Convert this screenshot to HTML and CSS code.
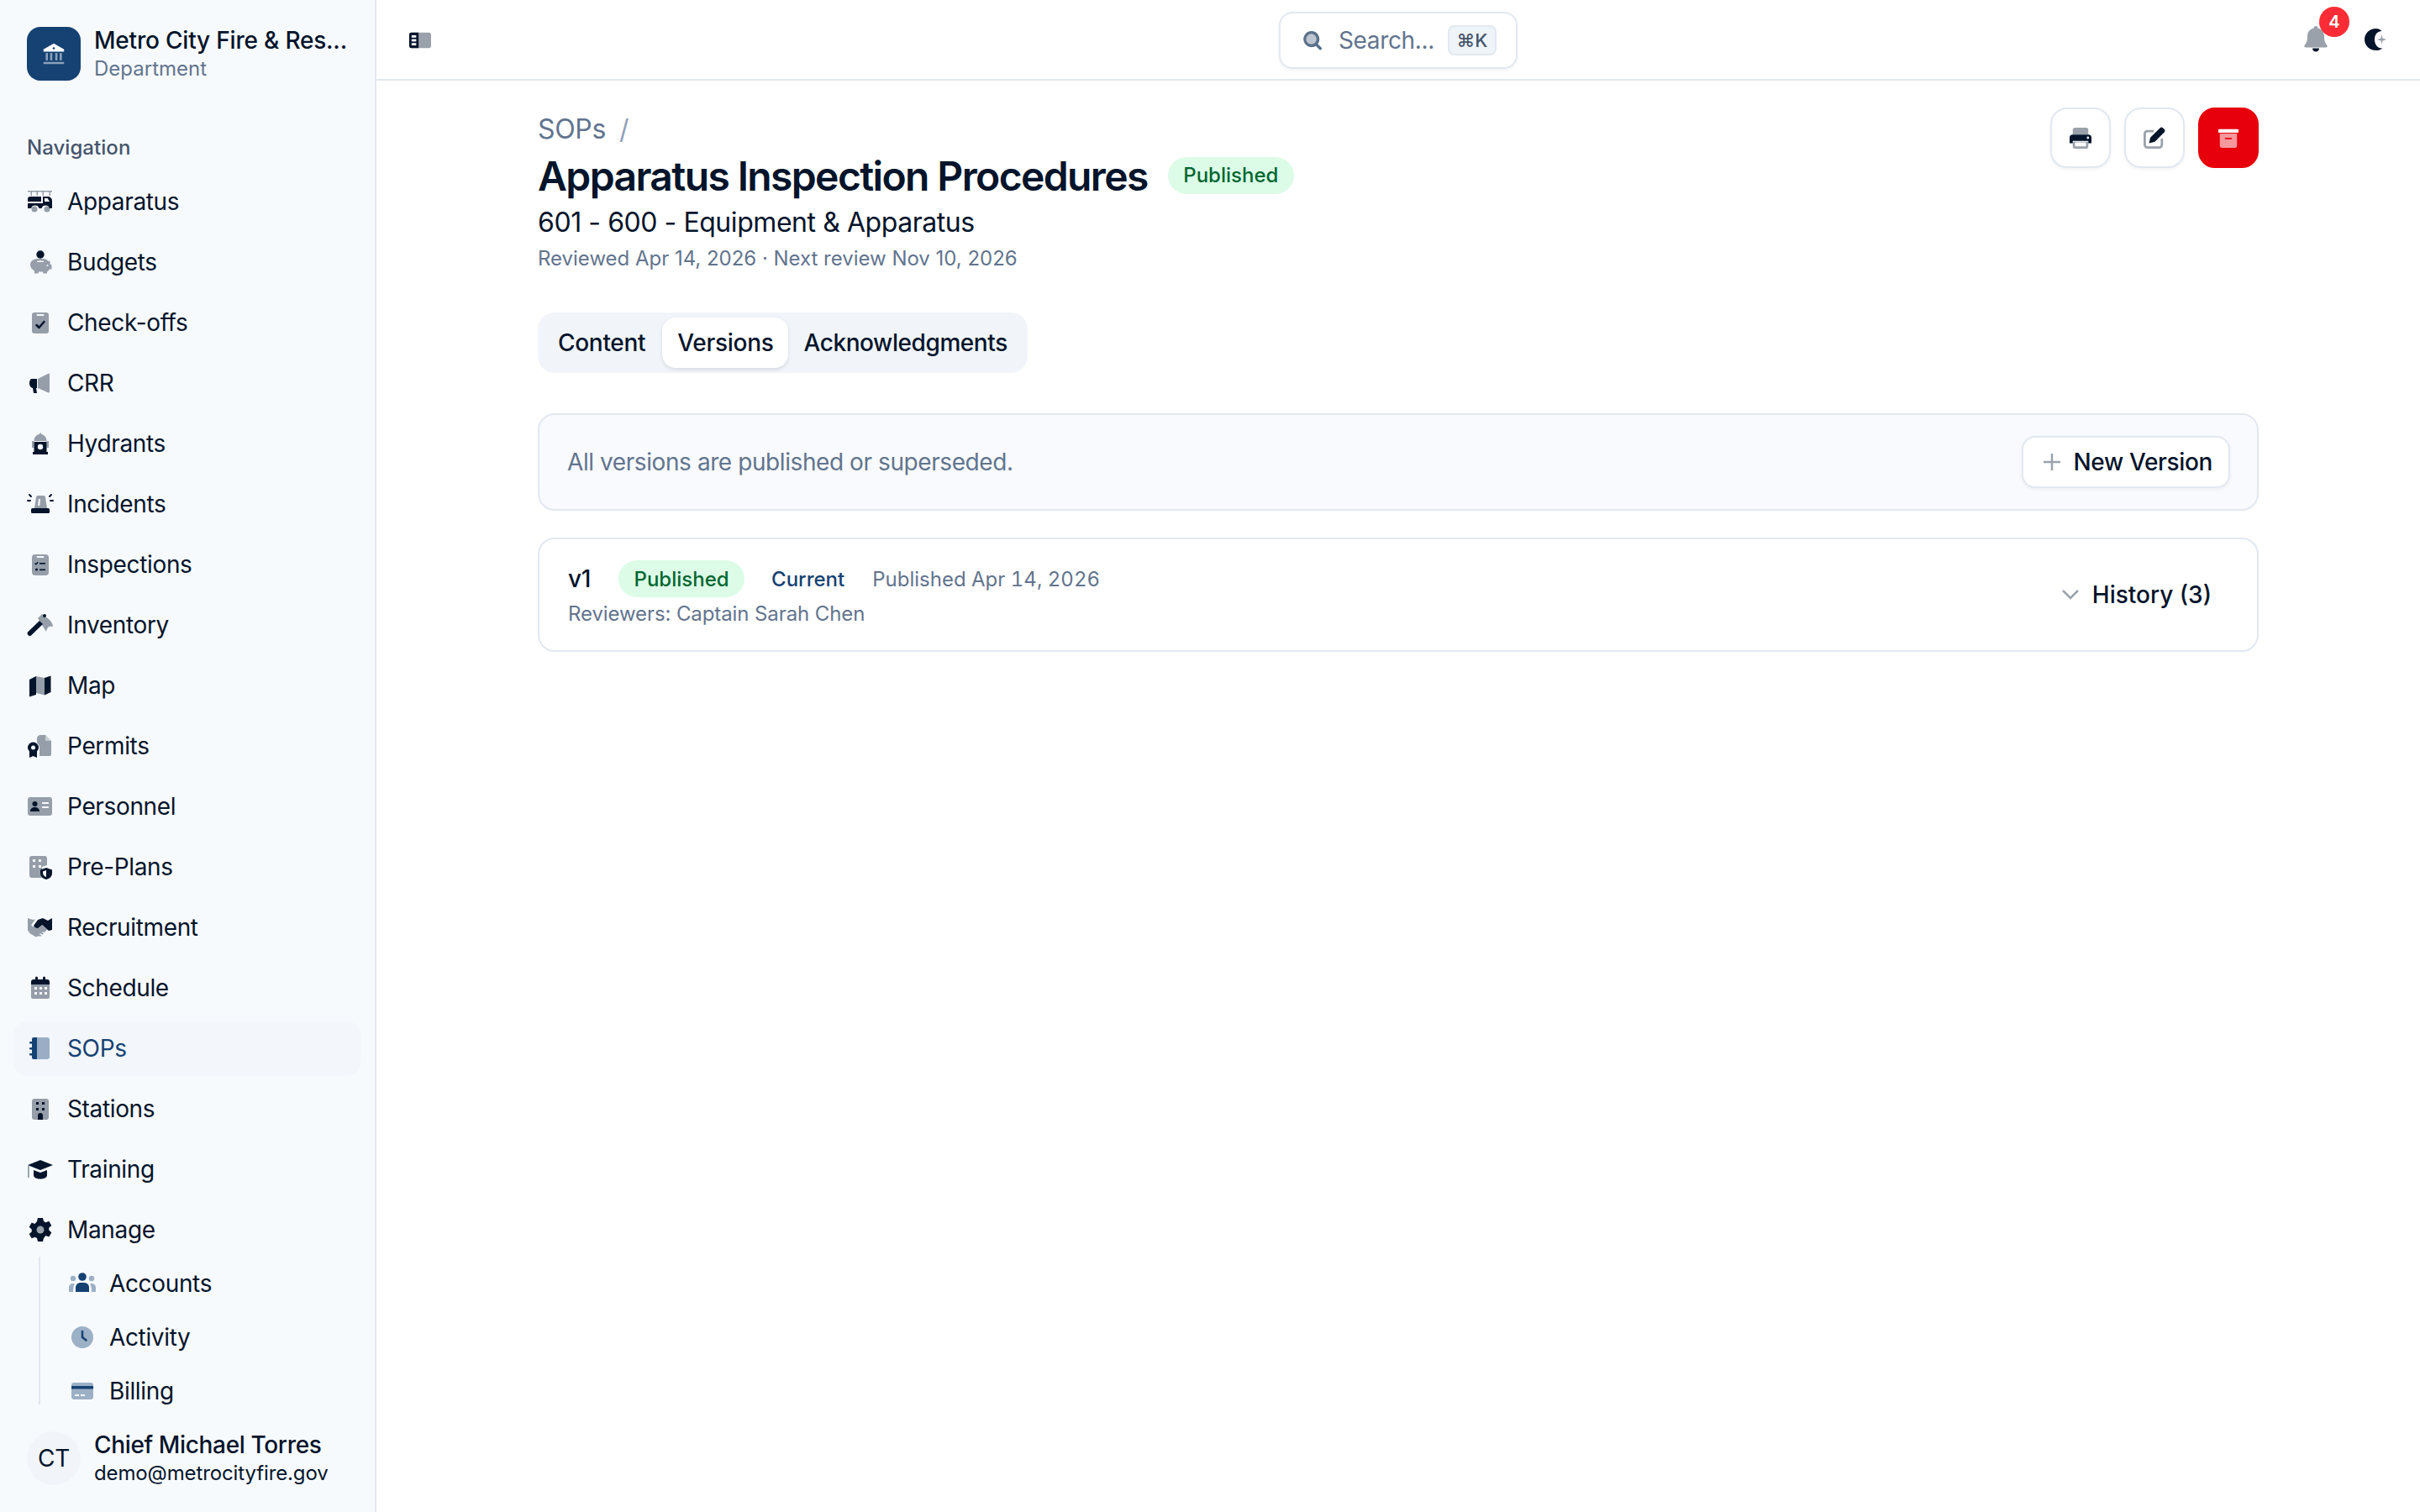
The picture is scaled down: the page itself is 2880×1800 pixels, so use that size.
FILE: index.html
```html
<!DOCTYPE html>
<html lang="en">
<head>
<meta charset="utf-8">
<title>Apparatus Inspection Procedures</title>
<link rel="stylesheet" href="styles.css">
</head>
<body>
<div class="app">
  <aside class="sidebar">
    <div class="brand">
      <div class="logo">
        <svg class="logo-icon" viewBox="0 0 32 32"><path class="w" d="M16 2 L30 10 V13 H2 V10 Z"/><circle class="b" cx="16" cy="8.500" r="1.500"/><g class="w s"><rect x="5" y="15" width="3" height="10"/><rect x="11" y="15" width="3" height="10"/><rect x="18" y="15" width="3" height="10"/><rect x="24" y="15" width="3" height="10"/><rect x="2" y="27" width="28" height="3" rx="1"/></g></svg>
      </div>
      <div class="brand-text">
        <div class="brand-name">Metro City Fire &amp; Res...</div>
        <div class="brand-sub">Department</div>
      </div>
    </div>
    <div class="nav-label">Navigation</div>
    <nav class="nav">
      <a class="item"><svg class="ic" viewBox="0 0 32 32"><path class="s" d="M1 3h29v1.500H28V9h-1.500V4.500H20V9h-1.500V4.500H13V9h-1.500V4.500H6V9H4.500V4.500H1z"/><path d="M4 10h13v6H1v-3a3 3 0 0 1 3-3zM19 10h6a5 5 0 0 1 5 5v9h-3a5 5 0 0 0-9.500 0h-3a5 5 0 0 0-9.500 0H1v-6h18z"/><path class="bg" d="M21 12h3.500l2.500 4h-6z"/><g class="s"><circle cx="9" cy="25" r="3.500"/><circle cx="24" cy="25" r="3.500"/></g></svg><span>Apparatus</span></a>
      <a class="item"><svg class="ic" viewBox="0 0 32 32"><circle cx="16" cy="7" r="4.700"/><path class="s" d="M13 12h6c3 0 5 1 6.500 3l2-.5v4l2 1v5h-2.500c-1 1.500-2 2.300-3 3v2h-4.500l-.5-2h-5l-.5 2H9v-3c-3-2-5-4-5-7.500C4 15 8 12 13 12z"/><rect class="bg" x="12" y="14.500" width="8" height="1.500" rx=".7"/><circle class="bg" cx="24.500" cy="20" r="1"/></svg><span>Budgets</span></a>
      <a class="item"><svg class="ic" viewBox="0 0 32 32"><rect class="s" x="6" y="4" width="20" height="25" rx="3"/><rect class="bg" x="11.500" y="6" width="9" height="2" rx="1"/><path class="line" d="M11.500 19l3 3 6-7"/></svg><span>Check-offs</span></a>
      <a class="item"><svg class="ic" viewBox="0 0 32 32"><path class="s" d="M13 11 L25 5 C26.500 4.200 27 5 27 6 V26 C27 27.500 26 28 25 27.300 L13 22z"/><path d="M6 11h6v11H11l1 6h-4l-1-6c-2-.5-4-2-4-5.500S4 11 6 11z"/></svg><span>CRR</span></a>
      <a class="item"><svg class="ic" viewBox="0 0 32 32"><path class="s" d="M16 3l1.500 2C21 6 23.500 8.500 23.500 13H26v8h-2.500v-8h-15v8H6v-8h2.500c0-4.500 2.500-7 6-8z"/><path d="M8.500 14h15v12H25v3H7v-3h1.500z"/><circle class="bg" cx="16" cy="20" r="3.200"/></svg><span>Hydrants</span></a>
      <a class="item"><svg class="ic" viewBox="0 0 32 32"><path class="s" d="M11 8a2 2 0 0 1 2-2h7a2 2 0 0 1 2 2l2 13H9z"/><rect x="5" y="21" width="22" height="6" rx="1.500"/><path class="bg" d="M14 10h2l-.7 8h-2.300z"/><path class="line2" d="M3 5l2 2M29 5l-2 2M1 12h3M28 12h3"/></svg><span>Incidents</span></a>
      <a class="item"><svg class="ic" viewBox="0 0 32 32"><rect class="s" x="6" y="4" width="20" height="25" rx="4"/><rect class="bg" x="11.500" y="6" width="9" height="2" rx="1"/><path class="line3" d="M9.500 14.500l1.300 1.300 2.500-2.500"/><rect x="15" y="14" width="7" height="1.600"/><circle cx="11.500" cy="22" r="1.500"/><rect x="15" y="21.500" width="7" height="1.600"/></svg><span>Inspections</span></a>
      <a class="item"><svg class="ic" viewBox="0 0 32 32"><path class="s" d="M13 8l5-5 4 3 4 3c3 3 5 6 5 9-2-.5-3-.5-5 0-1.500 1.500-2.500 3-3 6z"/><path d="M1.500 24L15 11l4 4L5 28.500c-1 1-2 1-3.500-.5s-1-3 0-4z"/><circle cx="21" cy="5" r="2"/></svg><span>Inventory</span></a>
      <a class="item"><svg class="ic" viewBox="0 0 32 32"><path d="M3 9l8-4v22l-8 2.500zM21 7l7.500-2.500V24l-7.500 3.500z"/><path class="s" d="M11 5l10 2v20.500L11 25z"/></svg><span>Map</span></a>
      <a class="item"><svg class="ic" viewBox="0 0 32 32"><path class="s" d="M16 3h6l7 7v16a2 2 0 0 1-2 2H15v-7a10 10 0 0 0-3-9V7c0-2 2-4 4-4z"/><path class="bg" d="M22 3v7h7" style="opacity:.5"/><circle cx="7.500" cy="18" r="6.500"/><circle class="bg" cx="7.500" cy="18" r="2.500"/><path d="M3 23h9v7l-4.500-2L3 30z"/></svg><span>Permits</span></a>
      <a class="item"><svg class="ic" viewBox="0 0 32 32"><rect class="s" x="1" y="5" width="29" height="22" rx="3"/><circle cx="9.500" cy="13" r="3"/><path d="M4 22c0-3.500 2.500-5 5.500-5s5.500 1.500 5.500 5z"/><rect class="bg" x="18" y="11" width="8" height="2" rx=".5"/><rect class="bg" x="18" y="16" width="8" height="2" rx=".5"/></svg><span>Personnel</span></a>
      <a class="item"><svg class="ic" viewBox="0 0 32 32"><path class="s" d="M6 3h15a3 3 0 0 1 3 3v8l-6 2v13H6a3 3 0 0 1-3-3V6a3 3 0 0 1 3-3z"/><g class="bg"><rect x="7" y="7" width="3" height="3"/><rect x="14" y="7" width="3" height="3"/><rect x="7" y="14" width="3" height="3"/><rect x="14" y="14" width="3" height="3"/></g><path d="M23 17l7 2.500v4c0 4-3 6.500-7 7.500-4-1-7-3.500-7-7.500v-4z"/><path class="bg" d="M23 20v8c-2.500-1-4-2.500-4-5v-1.500z"/></svg><span>Pre-Plans</span></a>
      <a class="item"><svg class="ic" viewBox="0 0 32 32"><path class="s" d="M1 5l6 2 3-.5-5 7 3 2 6-5 10 8-7 8h-4l-2 1-7-4-3-4z"/><path d="M13 7l6-2 6 3 5-3v14l-4 1-8-7-5 4c-2.500 0-4-1.500-5-3z"/><path class="bg" d="M19 21l4 3-1 1-4-3zM16 23l4 3-1 1-4-3z"/></svg><span>Recruitment</span></a>
      <a class="item"><svg class="ic" viewBox="0 0 32 32"><path d="M10 4a1.500 1.500 0 0 1 3 0v2h6V4a1.500 1.500 0 0 1 3 0v2h2a3 3 0 0 1 3 3v3H5V9a3 3 0 0 1 3-3h2z"/><path class="s" d="M5 12h22v15a2 2 0 0 1-2 2H7a2 2 0 0 1-2-2z"/><g class="bg"><rect x="9" y="15" width="3" height="3"/><rect x="15" y="15" width="3" height="3"/><rect x="21" y="15" width="3" height="3"/><rect x="9" y="21" width="3" height="3"/><rect x="15" y="21" width="3" height="3"/><rect x="21" y="21" width="3" height="3"/></g></svg><span>Schedule</span></a>
      <a class="item active"><svg class="ic blue" viewBox="0 0 32 32"><path class="s" d="M11 3h13a3 3 0 0 1 3 3v20a3 3 0 0 1-3 3H11z"/><path d="M8 3h4v26H8a2 2 0 0 1-2-2V5a2 2 0 0 1 2-2z"/><rect x="3" y="8" width="5" height="2.500" rx="1"/><rect x="3" y="15" width="5" height="2.500" rx="1"/><rect x="3" y="22" width="5" height="2.500" rx="1"/></svg><span>SOPs</span></a>
      <a class="item"><svg class="ic" viewBox="0 0 32 32"><rect class="s" x="6" y="4" width="20" height="25" rx="3"/><rect x="11" y="8" width="3" height="3"/><rect x="18" y="8" width="3" height="3"/><rect x="11" y="15" width="3" height="3"/><rect x="18" y="15" width="3" height="3"/><path d="M13 24a3 3 0 0 1 6 0v5h-6z"/></svg><span>Stations</span></a>
      <a class="item"><svg class="ic" viewBox="0 0 32 32"><path d="M16 5l15 6-15 6-15-6z"/><path d="M8 17l8 3 8-3v6c0 3-4 4.500-8 4.500S8 26 8 23z"/><rect class="s" x="1" y="12" width="1.800" height="14"/></svg><span>Training</span></a>
      <a class="item"><svg class="ic" viewBox="0 0 32 32"><path d="M13 2h6l1 4 2.500 1.200 3.800-1.500 3 5.300-3 2.600v3l3 2.600-3 5.300-3.800-1.500L20 26l-1 4h-6l-1-4-2.500-1.200-3.800 1.500-3-5.300 3-2.600v-3l-3-2.600 3-5.300 3.800 1.500L12 6z"/><circle class="s0" cx="16" cy="16" r="4.500"/></svg><span>Manage</span></a>
      <div class="subnav">
        <a class="item sub"><svg class="ic blue" viewBox="0 0 32 32"><g class="s"><circle cx="5" cy="10" r="3.200"/><circle cx="27" cy="10" r="3.200"/><path d="M0 26v-5c0-3 2-5 5-5h2c-1.500 2-2 6-2 10zM32 26v-5c0-3-2-5-5-5h-2c1.500 2 2 6 2 10z"/></g><circle cx="16" cy="8" r="4.800"/><path d="M8 26v-5c0-4 3-6 6-6h4c3 0 6 2 6 6v5z"/></svg><span>Accounts</span></a>
        <a class="item sub"><svg class="ic blue" viewBox="0 0 32 32"><circle class="s" cx="16" cy="16" r="13"/><path class="line" d="M16 9v7l4.500 3.500"/></svg><span>Activity</span></a>
        <a class="item sub"><svg class="ic blue" viewBox="0 0 32 32"><path class="s" d="M6 6h20a3 3 0 0 1 3 3v14a3 3 0 0 1-3 3H6a3 3 0 0 1-3-3V9a3 3 0 0 1 3-3z"/><rect x="3" y="10" width="26" height="3.500"/><rect class="bg" x="7" y="20" width="5" height="2"/><rect class="bg" x="14" y="20" width="5" height="2"/></svg><span>Billing</span></a>
      </div>
    </nav>
    <div class="user">
      <div class="avatar">CT</div>
      <div class="user-text">
        <div class="user-name">Chief Michael Torres</div>
        <div class="user-mail">demo@metrocityfire.gov</div>
      </div>
    </div>
  </aside>
  <div class="main">
    <header class="topbar">
      <svg class="toggle" viewBox="0 0 28 20"><rect class="s" x="0" y="0" width="28" height="20" rx="3"/><path d="M3 0h9v20H3a3 3 0 0 1-3-3V3a3 3 0 0 1 3-3z"/><g class="w"><rect x="3" y="3.500" width="6" height="3"/><rect x="3" y="8.500" width="6" height="3"/><rect x="3" y="13.500" width="6" height="3"/></g></svg>
      <div class="search">
        <svg class="search-ic" viewBox="0 0 24 24"><circle class="s" cx="10" cy="10" r="8"/><path d="M10 0a10 10 0 0 1 8 16l5.500 5.500-2.500 2.500-5.500-5.500A10 10 0 1 1 10 0zm0 3.500a6.500 6.500 0 1 0 0 13 6.500 6.500 0 0 0 0-13z"/></svg>
        <span class="search-text">Search...</span>
        <kbd class="kbd">⌘K</kbd>
      </div>
      <div class="top-right">
        <div class="bell">
          <svg class="bell-ic" viewBox="0 0 28 32"><path class="s" d="M14 0c1.500 0 2.500 1 2.500 2.500C21 3.500 24 7 24 12c0 6 1 8 3.500 11 .5 1 0 2.500-1.500 2.500H2C.5 25.500 0 24 .5 23 3 20 4 18 4 12c0-5 3-8.500 7.500-9.500C11.500 1 12.500 0 14 0z"/><path d="M10 26.500h8c0 2.500-2 4-4 4s-4-1.500-4-4z"/></svg>
          <span class="badge-count">4</span>
        </div>
        <svg class="moon" viewBox="0 0 26 26"><path d="M13.500 0C6 0 0 5.800 0 13s6 13 13.500 13c3 0 5.700-.9 8-2.600-5.500.6-9.500-4-9.500-10.400S16 3 20.500 3C18.700 1 16.500 0 13.500 0z"/><path class="s" d="M20.500 7l1 4.500 4.500 1.500-4.500 1.500-1 4.500-1-4.500L15 13l4.500-1.500z"/></svg>
      </div>
    </header>
    <main class="content">
      <div class="head">
        <div class="head-left">
          <div class="crumbs"><span>SOPs</span><span class="slash">/</span></div>
          <div class="title-row"><h1 class="title">Apparatus Inspection Procedures</h1><span class="pill">Published</span></div>
          <div class="subtitle">601 - 600 - Equipment &amp; Apparatus</div>
          <div class="meta">Reviewed Apr 14, 2026 · Next review Nov 10, 2026</div>
        </div>
        <div class="actions">
          <button class="act"><svg class="act-ic" viewBox="0 0 28 28"><path class="s" d="M4 10V4a3 3 0 0 1 3-3h14a3 3 0 0 1 3 3v6zM4 19h20v6a3 3 0 0 1-3 3H7a3 3 0 0 1-3-3z"/><path d="M4 10h20a4 4 0 0 1 4 4v7h-4v-3H4v3H0v-7a4 4 0 0 1 4-4z"/><rect class="w" x="7" y="20" width="14" height="5"/><circle class="w" cx="23.500" cy="14" r="1.500"/></svg></button>
          <button class="act"><svg class="act-ic" viewBox="0 0 28 28"><path class="s" d="M5 4h8v3H5a2 2 0 0 0-2 2v14a2 2 0 0 0 2 2h15a2 2 0 0 0 2-2v-8h3v8a5 5 0 0 1-5 5H5a5 5 0 0 1-5-5V9a5 5 0 0 1 5-5z"/><path d="M21 1.500a3 3 0 0 1 4 0l1.500 1.500a3 3 0 0 1 0 4L15 18.500c-.5.500-1 .8-1.500 1L7 21l1.500-6.500c.2-.6.500-1 1-1.500z"/></svg></button>
          <button class="act danger"><svg class="act-ic" viewBox="0 0 28 28"><rect class="w" x="1" y="3" width="26" height="4.500" rx="1"/><path class="w s5" d="M3 8.500h22v15.500a3 3 0 0 1-3 3H6a3 3 0 0 1-3-3z"/><rect class="red" x="9.500" y="14" width="9" height="2" rx="1"/></svg></button>
        </div>
      </div>
      <div class="tabs"><span class="tab">Content</span><span class="tab on">Versions</span><span class="tab">Acknowledgments</span></div>
      <section class="notice">
        <span class="notice-text">All versions are published or superseded.</span>
        <button class="new-btn"><svg class="plus" viewBox="0 0 20 20"><path d="M10 0v20M0 10h20"/></svg><span>New Version</span></button>
      </section>
      <section class="card">
        <div class="card-left">
          <div class="card-row"><span class="ver">v1</span><span class="pill">Published</span><span class="current">Current</span><span class="card-date">Published Apr 14, 2026</span></div>
          <div class="reviewers">Reviewers: Captain Sarah Chen</div>
        </div>
        <div class="history"><svg class="chev" viewBox="0 0 20 12"><path d="M1 1l9 9 9-9"/></svg><span>History (3)</span></div>
      </section>
    </main>
  </div>
</div>
</body>
</html>
```
FILE: styles.css
```css
* { box-sizing: border-box; }
html, body { margin: 0; height: 100%; }
body { font-family: Inter, "Liberation Sans", sans-serif; color: #03142b; background: #fff; font-size: 28px; letter-spacing: -.35px; }
.app { display: flex; height: 1800px; overflow: hidden; }

svg { fill: #03142b; flex: none; display: block; }
svg .s { opacity: .4; }
svg .s0 { fill: #9aa3ae; }
svg .bg { fill: #f7fafd; }
svg .w { fill: #fff; }
svg .line { fill: none; stroke: #03142b; stroke-width: 2.500; stroke-linecap: round; stroke-linejoin: round; }
svg .line2 { fill: none; stroke: #03142b; stroke-width: 2; stroke-linecap: round; }
svg .line3 { fill: none; stroke: #03142b; stroke-width: 1.300; }

.sidebar { width: 448px; flex: none; background: #f7fafd; border-right: 2px solid #e2e8f0; padding: 32px 16px 30px; display: flex; flex-direction: column; }
.brand { display: flex; align-items: center; gap: 16px; padding-left: 16px; height: 64px; }
.logo { width: 64px; height: 64px; border-radius: 16px; background: #154273; display: flex; align-items: center; justify-content: center; flex: none; }
.logo-icon { width: 28px; height: 28px; }
.logo-icon .b { fill: #154273; }
.logo-icon .s { opacity: .5; }
.brand-name { font-weight: 500; font-size: 28px; line-height: 36px; white-space: nowrap; letter-spacing: -.2px; }
.brand-sub { font-size: 24px; line-height: 32px; color: #62748e; letter-spacing: 0; }
.nav-label { margin-top: 64px; padding-left: 16px; font-size: 24px; line-height: 32px; font-weight: 500; color: #45556c; letter-spacing: .05px; }
.nav { display: flex; flex-direction: column; gap: 8px; margin-top: 16px; }
.item { display: flex; align-items: center; gap: 16px; height: 64px; padding: 0 16px; border-radius: 16px; font-size: 28px; }
.ic { width: 32px; height: 32px; }
.active { background: #f3f6fa; color: #154273; }
svg.blue { fill: #154273; }
svg.blue .line { stroke: #154273; }
.subnav { display: flex; flex-direction: column; gap: 8px; height: 176px; margin: -8px 0 0 30px; border-left: 2px solid #e2e8f0; padding: 4px 0 0 18px; }
.sub { height: 56px; flex: none; padding: 0 16px; }
.user { display: flex; align-items: center; gap: 16px; padding-left: 16px; margin-top: auto; }
.avatar { width: 64px; height: 64px; border-radius: 50%; background: #f1f5f9; display: flex; align-items: center; justify-content: center; font-size: 28px; flex: none; }
.user-name { font-size: 28px; line-height: 36px; font-weight: 500; white-space: nowrap; }
.user-mail { font-size: 24px; line-height: 32px; white-space: nowrap; letter-spacing: -.12px; }

.main { flex: 1; min-width: 0; display: flex; flex-direction: column; }
.topbar { height: 96px; border-bottom: 2px solid #e2e8f0; display: flex; align-items: center; padding: 0 40px 0 39px; position: relative; }
.toggle { width: 26px; height: 20px; margin-top: 2px; }
.search { position: absolute; left: 1074px; top: 14px; width: 284px; height: 68px; border: 2px solid #e2e8f0; border-radius: 16px; display: flex; align-items: center; gap: 19px; padding: 0 0 0 27px; box-shadow: 0 2px 4px rgba(15,23,43,.05); }
.search-ic { width: 23px; height: 23px; fill: #5b7189; }
.search-text { color: #62748e; font-size: 28px; letter-spacing: -.35px; }
.kbd { font-family: Inter, sans-serif; font-size: 22px; font-weight: 500; letter-spacing: 0; color: #45556c; background: #eff4f9; border: 2px solid #e2e8f0; border-radius: 8px; height: 36px; width: 58px; display: flex; align-items: center; justify-content: center; margin-left: -3px; flex: none; }
.top-right { margin-left: auto; display: flex; align-items: center; gap: 44px; }
.bell { position: relative; width: 28px; height: 32px; }
.bell-ic { width: 28px; height: 32px; }
.badge-count { position: absolute; left: 18px; top: -23px; width: 36px; height: 36px; border-radius: 50%; background: #fb2c36; color: #fff; font-size: 20px; font-weight: 600; letter-spacing: 0; display: flex; align-items: center; justify-content: center; }
.moon { width: 26px; height: 26px; }

.content { width: 2048px; margin: 0 auto; padding-top: 32px; }
.head { display: flex; justify-content: space-between; align-items: flex-start; }
.crumbs { display: flex; gap: 16px; font-size: 32px; line-height: 48px; color: #62748e; margin-top: 2px; letter-spacing: -.35px; }
.slash { color: #90a1b9; }
.title-row { display: flex; align-items: center; gap: 24px; margin-top: 2px; }
.title { margin: 0; font-size: 48px; line-height: 60px; font-weight: 600; letter-spacing: -1.620px; }
.title-row .pill { margin-top: -3px; }
.pill { background: #dcfce7; color: #016630; font-size: 24px; font-weight: 500; letter-spacing: 0; height: 44px; padding: 0 18.500px; border-radius: 22px; display: flex; align-items: center; }
.subtitle { font-size: 32px; line-height: 48px; margin-top: 1px; letter-spacing: -.44px; }
.meta { font-size: 24px; line-height: 36px; color: #62748e; margin-top: 1px; letter-spacing: -.02px; }
.actions { display: flex; gap: 16px; }
.act { width: 72px; height: 72px; border-radius: 20px; border: 2px solid #e2e8f0; background: #fff; display: flex; align-items: center; justify-content: center; padding: 0; box-shadow: 0 2px 4px rgba(15,23,43,.05); }
.act-ic { width: 26px; height: 26px; }
.danger { background: #e7000b; border-color: #e7000b; box-shadow: none; }
.danger .s5 { opacity: .6; }
.danger .red { fill: #e7000b; }
.tabs { display: inline-flex; margin-top: 46px; height: 72px; padding: 6px; background: #f1f5f9; border-radius: 20px; }
.tab { display: flex; align-items: center; padding: 0 18px; font-size: 28px; font-weight: 500; letter-spacing: -.3px; border-radius: 16px; }
.tab:first-child { padding-right: 20px; }
.tab:last-child { letter-spacing: -.42px; }
.on { background: #fff; box-shadow: 0 2px 4px rgba(15,23,43,.12); }
.notice { display: flex; align-items: center; justify-content: space-between; height: 116px; margin-top: 48px; padding: 0 32px 0 33px; border: 2px solid #e2e8f0; border-radius: 20px; background: #f8fafd; }
.notice-text { color: #62748e; font-size: 28px; letter-spacing: -.42px; }
.new-btn { display: flex; align-items: center; gap: 16px; height: 62px; padding: 0 19px 0 24px; border: 2px solid #e2e8f0; border-radius: 16px; background: #fff; font: 500 28px Inter, sans-serif; letter-spacing: -.35px; color: #03142b; box-shadow: 0 2px 4px rgba(15,23,43,.05); }
.plus { width: 20px; height: 20px; fill: none; stroke: #9aa3ae; stroke-width: 2.500; }
.card { display: flex; align-items: center; justify-content: space-between; height: 136px; margin-top: 32px; padding: 0 54px 0 34px; border: 2px solid #e2e8f0; border-radius: 20px; background: #fff; }
.card-left { padding-bottom: 2px; }
.card-row { display: flex; align-items: center; gap: 32px; }
.ver { font-size: 28px; font-weight: 500; width: 28px; }
.current { font-size: 24px; font-weight: 500; letter-spacing: 0; color: #154273; margin-right: 1px; }
.card-date { font-size: 24px; color: #62748e; letter-spacing: 0; font-variant-numeric: tabular-nums; }
.reviewers { font-size: 24px; line-height: 32px; color: #62748e; margin-top: 4px; letter-spacing: -.1px; }
.history { display: flex; align-items: center; gap: 16px; font-size: 28px; font-weight: 500; letter-spacing: 0; }
.chev { width: 20px; height: 12px; fill: none; stroke: #9aa3ae; stroke-width: 2.500; }
```
